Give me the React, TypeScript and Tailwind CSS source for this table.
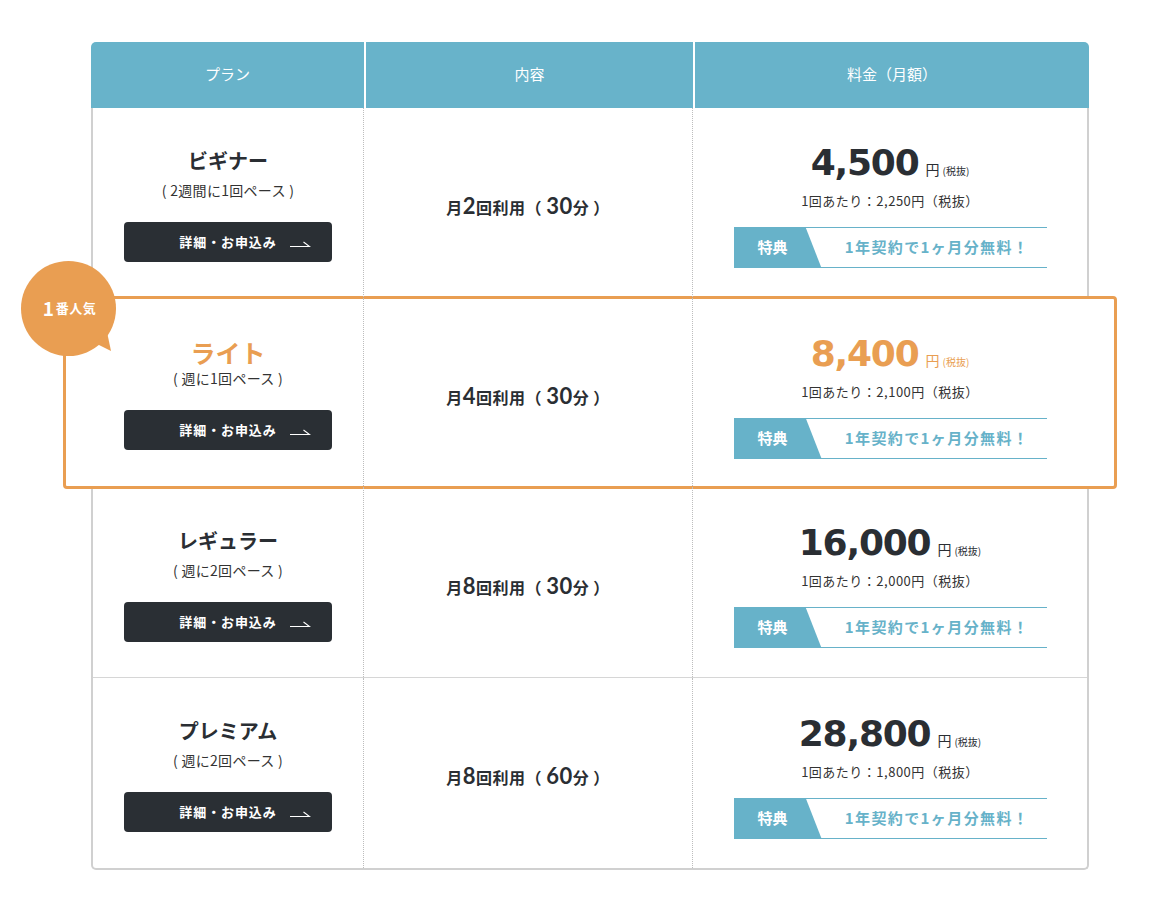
import React from "react";

const JP = "font-['Noto_Sans_CJK_JP','Noto_Sans',sans-serif]";

type Plan = {
  name: string;
  sub: string;
  times: string;
  minutes: string;
  price: string;
  per: string;
  hl?: boolean;
};

const plans: Plan[] = [
  { name: "ビギナー", sub: "( 2週間に1回ペース )", times: "2", minutes: "30", price: "4,500", per: "2,250" },
  { name: "ライト", sub: "( 週に1回ペース )", times: "4", minutes: "30", price: "8,400", per: "2,100", hl: true },
  { name: "レギュラー", sub: "( 週に2回ペース )", times: "8", minutes: "30", price: "16,000", per: "2,000" },
  { name: "プレミアム", sub: "( 週に2回ペース )", times: "8", minutes: "60", price: "28,800", per: "1,800" },
];

function Arrow() {
  return (
    <svg width="21" height="8" viewBox="0 0 21 8" className="absolute right-[21px] top-[18px]">
      <path d="M0 6.5 H19.5 L13.5 2" fill="none" stroke="#ffffff" strokeWidth="1.1" />
    </svg>
  );
}

function Row({ p, last }: { p: Plan; last: boolean }) {
  const priceColor = p.hl ? "text-[#e99e52]" : "text-[#2a2e33]";
  return (
    <div className={`relative flex h-[190px] ${!last && !p.hl ? "border-b border-[#d6d6d6]" : ""}`}>
      {p.hl && (
        <>
          <div className="absolute left-[-30px] right-[-30px] top-[-2px] bottom-[-1px] z-0 rounded-[4px] border-[3px] border-[#e99e52] bg-white" />
          <div className="absolute left-[-72px] top-[-37px] z-20 h-[95px] w-[95px]">
            <svg width="95" height="95" viewBox="0 0 95 95" className="absolute left-0 top-0">
              <circle cx="47.5" cy="47.5" r="47.5" fill="#e99e52" />
              <polygon points="74,82 86,71 90,90" fill="#e99e52" />
            </svg>
            <div className={`absolute inset-0 flex items-center justify-center pb-[2px] pl-[2px] text-white font-bold ${JP}`}>
              <span className="text-[19px] leading-none mr-[2px]">1</span>
              <span className="text-[13px] leading-none tracking-[0.5px]">番人気</span>
            </div>
          </div>
        </>
      )}
      {/* col 1 */}
      <div className="relative z-10 flex w-[271px] flex-col items-center justify-center border-r border-dotted border-[#bdbdbd] pt-[3px]">
        <div
          className={`${JP} font-bold ${p.hl ? "text-[25px] leading-[26px] text-[#e99e52]" : "text-[20px] leading-[28px] text-[#2a2e33]"}`}
        >
          {p.name}
        </div>
        <div className={`${JP} text-[14px] tracking-[0.3px] leading-[20px] text-[#333] ${p.hl ? "mt-[3px]" : "mt-[5px]"}`}>{p.sub}</div>
        <div className="relative mt-[22px] flex h-[40px] w-[208px] items-center justify-center rounded-[4px] bg-[#2a2f34]">
          <span className={`${JP} text-[13px] font-bold text-white tracking-[0.9px]`}>詳細・お申込み</span>
          <Arrow />
        </div>
      </div>
      {/* col 2 */}
      <div className="relative z-10 flex w-[329px] items-center justify-center border-r border-dotted border-[#bdbdbd] pt-[8px]">
        <div className={`${JP} flex items-baseline whitespace-pre font-bold text-[16px] tracking-[0.5px] text-[#2a2e33]`}>
          <span>月</span>
          <span className="font-['Lato',sans-serif] text-[22px] font-bold leading-none">{p.times}</span>
          <span>回利用（ </span>
          <span className="font-['Lato',sans-serif] text-[22px] font-bold leading-none">{p.minutes}</span>
          <span>分 ）</span>
        </div>
      </div>
      {/* col 3 */}
      <div className="relative z-10 flex flex-1 flex-col items-center justify-center pt-[6px]">
        <div className={`flex items-baseline ${priceColor}`}>
          <span className="font-['DejaVu_Sans',sans-serif] text-[36px] font-bold leading-[40px] tracking-[-1.2px]">
            {p.price}
          </span>
          <span className={`${JP} ml-[7px] text-[14px]`}>円</span>
          <span className={`${JP} ml-[3px] text-[10px]`}>(税抜)</span>
        </div>
        <div className={`${JP} mt-[8px] text-[13px] tracking-[0.5px] leading-[20px] text-[#333]`}>
          1回あたり：{p.per}円（税抜）
        </div>
        <div className="mt-[16px] flex h-[41px] w-[313px] border-y border-[#67b2c9]">
          <div
            className="my-[-1px] flex w-[88px] items-center pl-[24px] bg-[#67b2c9]"
            style={{ clipPath: "polygon(0 0, 72px 0, 100% 100%, 0 100%)" }}
          >
            <span className={`${JP} text-[15px] font-bold text-white`}>特典</span>
          </div>
          <div className="flex flex-1 items-center justify-center pl-[6px]">
            <span className={`${JP} text-[15px] font-bold tracking-[1.4px] text-[#67b2c9]`}>
              1年契約で1ヶ月分無料！
            </span>
          </div>
        </div>
      </div>
    </div>
  );
}

export default function App() {
  return (
    <div className="min-h-[901px] w-full bg-white pl-[91px] pt-[42px]">
      <div className="w-[998px]">
        <div className={`flex h-[66px] overflow-hidden rounded-t-[5px] text-white ${JP} text-[15px]`}>
          <div className="flex w-[275px] items-center justify-center border-r-2 border-white bg-[#68b3ca] pb-[2px]">
            プラン
          </div>
          <div className="flex w-[329px] items-center justify-center border-r-2 border-white bg-[#68b3ca] pb-[2px]">
            内容
          </div>
          <div className="flex flex-1 items-center justify-center bg-[#68b3ca] pb-[2px]">料金（月額）</div>
        </div>
        <div className="rounded-b-[5px] border-x-2 border-b-2 border-[#d0d0d0]">
          {plans.map((p, i) => (
            <Row key={i} p={p} last={i === plans.length - 1} />
          ))}
        </div>
      </div>
    </div>
  );
}
